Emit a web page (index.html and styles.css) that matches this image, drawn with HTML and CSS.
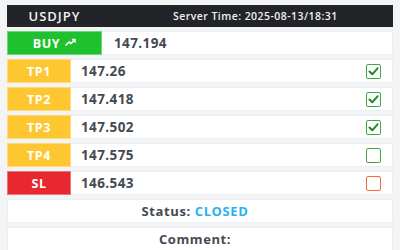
FILE: index.html
```html
<!DOCTYPE html>
<html>
<head>
<meta charset="utf-8">
<link rel="stylesheet" href="styles.css">
</head>
<body>
<div class="panel">
  <div class="header">
    <div class="symbol">USDJPY</div>
    <div class="time">Server Time: 2025-08-13/18:31</div>
  </div>
  <div class="row">
    <div class="label buy">BUY
      <svg class="trend" width="11" height="8" viewBox="0 0 11 8"><path d="M1 7 L4 4 L6 5.5 L10 1.5 M7.5 1.5 H10 V4" fill="none" stroke="#fff" stroke-width="1.6" stroke-linecap="round" stroke-linejoin="round"/></svg>
    </div>
    <div class="price buy-price">147.194</div>
  </div>
  <div class="row">
    <div class="label tp">TP1</div>
    <div class="price">147.26</div>
    <span class="box green checked"><svg width="11" height="9" viewBox="0 0 11 9"><path d="M1.5 4.5 L4.3 7.3 L9.5 1.3" fill="none" stroke="#1f8a25" stroke-width="2" stroke-linecap="round" stroke-linejoin="round"/></svg></span>
  </div>
  <div class="row">
    <div class="label tp">TP2</div>
    <div class="price">147.418</div>
    <span class="box green checked"><svg width="11" height="9" viewBox="0 0 11 9"><path d="M1.5 4.5 L4.3 7.3 L9.5 1.3" fill="none" stroke="#1f8a25" stroke-width="2" stroke-linecap="round" stroke-linejoin="round"/></svg></span>
  </div>
  <div class="row">
    <div class="label tp">TP3</div>
    <div class="price">147.502</div>
    <span class="box green checked"><svg width="11" height="9" viewBox="0 0 11 9"><path d="M1.5 4.5 L4.3 7.3 L9.5 1.3" fill="none" stroke="#1f8a25" stroke-width="2" stroke-linecap="round" stroke-linejoin="round"/></svg></span>
  </div>
  <div class="row">
    <div class="label tp">TP4</div>
    <div class="price">147.575</div>
    <span class="box green"></span>
  </div>
  <div class="row">
    <div class="label sl">SL</div>
    <div class="price">146.543</div>
    <span class="box orange"></span>
  </div>
  <div class="row center">Status:&nbsp;<span class="closed">CLOSED</span></div>
  <div class="row center">Comment:</div>
</div>
</body>
</html>
```
FILE: styles.css
```css
html, body {
  margin: 0;
  padding: 0;
  background: #f3f4f6;
}
body {
  font-family: "Open Sans", "DejaVu Sans", sans-serif;
}
.panel {
  padding: 5px 7px 0 7px;
  display: flex;
  flex-direction: column;
  gap: 4px;
}
.header {
  height: 22px;
  background: #222429;
  display: flex;
  align-items: center;
  color: #f2f2f2;
}
.symbol {
  width: 95px;
  text-align: center;
  font-size: 13px;
  font-weight: 600;
  letter-spacing: 1px;
}
.time {
  margin-left: 71px;
  font-size: 10.5px;
  font-weight: 600;
  letter-spacing: 0.45px;
  white-space: nowrap;
}
.row {
  height: 24px;
  background: #fff;
  display: flex;
  align-items: center;
  box-shadow: inset 0 0 0 1px #eceef1;
}
.label {
  align-self: stretch;
  display: flex;
  align-items: center;
  justify-content: center;
  color: #fff;
  font-weight: 700;
  font-size: 12.5px;
  letter-spacing: 0.6px;
  box-shadow: inset 0 0 0 1px rgba(255,255,255,0.35);
}
.buy {
  width: 95px;
  background: #1ec22e;
  gap: 5px;
}
.trend { margin-top: -3px; }
.tp {
  width: 64px;
  background: #fec631;
}
.sl {
  width: 64px;
  background: #e8282f;
}
.price {
  flex: 1;
  padding-left: 10px;
  font-weight: 700;
  font-size: 13.5px;
  letter-spacing: 0.4px;
  color: #454a52;
}
.buy-price { padding-left: 12px; }
.box {
  width: 13px;
  height: 13px;
  border: 1px solid;
  border-radius: 2px;
  margin-right: 12px;
  display: flex;
  align-items: center;
  justify-content: center;
}
.green { border-color: #3fa845; }
.orange { border-color: #f26a3a; }
.center {
  justify-content: center;
  font-weight: 700;
  font-size: 13px;
  letter-spacing: 0.6px;
  color: #454a52;
  padding-right: 10px;
}
.closed { color: #2bb0f0; }
```
